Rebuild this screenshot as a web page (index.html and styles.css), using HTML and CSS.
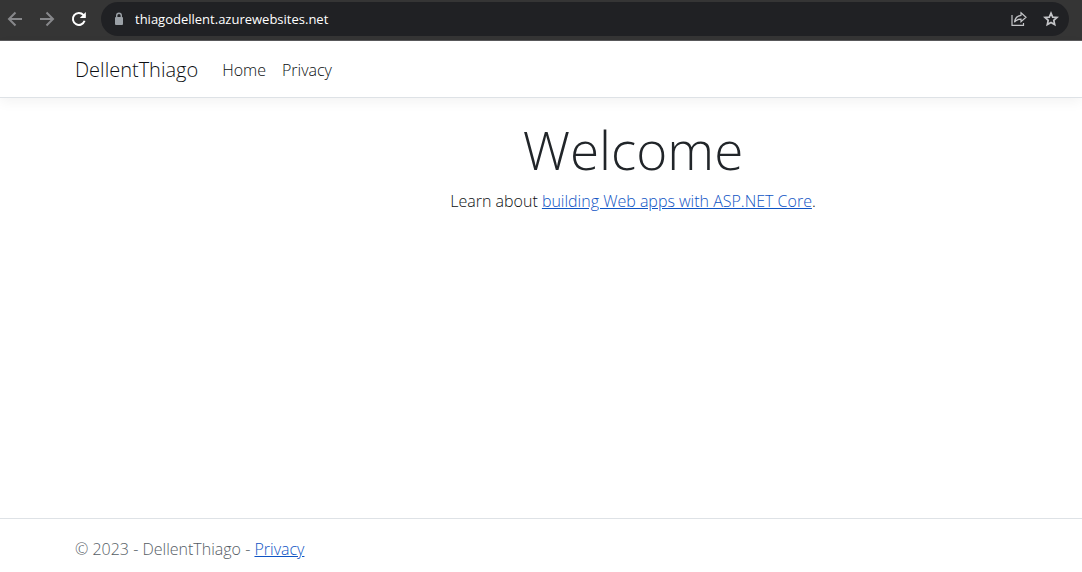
FILE: index.html
```html
<!DOCTYPE html>
<html lang="en">
<head>
<meta charset="utf-8">
<title>Home page - DellentThiago</title>
<link rel="stylesheet" href="styles.css">
</head>
<body>
<div class="toolbar">
  <button class="tool" aria-label="Back"><svg class="dim" width="16" height="16" viewBox="0 0 16 16"><path d="M15 8H2.500M8.500 1.500L2 8L8.500 14.500"/></svg></button>
  <button class="tool" aria-label="Forward"><svg class="dim" width="16" height="16" viewBox="0 0 16 16"><path d="M1 8H13.500M7.500 1.500L14 8L7.500 14.500"/></svg></button>
  <button class="tool" aria-label="Reload"><svg class="bright" width="16" height="16" viewBox="0 0 16 16"><path d="M13.600 9.800A6 6 0 1 1 12.400 3.900L14 5.500"/><path class="solid" d="M14.800 1V7H8.800Z"/></svg></button>
  <div class="address">
    <svg class="lock" width="10" height="14" viewBox="0 0 10 14"><rect x="1" y="5" width="8" height="8" rx="1"/><path d="M2.700 5V3.500a2.300 2.300 0 0 1 4.600 0V5"/></svg>
    <input class="url" type="text" aria-label="Address" value="thiagodellent.azurewebsites.net">
    <button class="tool" aria-label="Share"><svg class="light thin" width="16" height="16" viewBox="0 0 16 16"><path d="M1 4V14.300H12.500V12M10 1.800L15 6.200L10 10.600V8.200C7 8.200 5 9 3.500 11.200C4 7.200 6.300 4.800 10 4.300Z"/></svg></button>
    <button class="tool" aria-label="Bookmark"><svg class="light" width="16" height="16" viewBox="0 0 16 16"><path d="M8 2.200L9.700 6.100L14 6.500L10.800 9.400L11.700 13.600L8 11.400L4.300 13.600L5.200 9.400L2 6.500L6.300 6.100Z"/></svg></button>
  </div>
</div>
<header class="header">
  <nav class="nav">
    <a class="brand" href="#">DellentThiago</a>
    <a class="nav-link" href="#">Home</a>
    <a class="nav-link" href="#">Privacy</a>
  </nav>
</header>
<main class="main">
  <h1 class="title">Welcome</h1>
  <p class="lead">Learn about <a class="link" href="#">building Web apps with ASP.NET Core</a>.</p>
</main>
<footer class="footer">© 2023 - DellentThiago - <a class="link" href="#">Privacy</a></footer>
</body>
</html>
```
FILE: styles.css
```css
* { box-sizing: border-box; }
body {
  margin: 0;
  min-height: 100vh;
  display: flex;
  flex-direction: column;
  background: #fff;
  color: #0c0f12;
  font: 300 16px/24px "Segoe UI", "Open Sans", "Noto Sans", sans-serif;
}
.toolbar {
  display: flex;
  align-items: center;
  gap: 16px;
  height: 41px;
  padding: 0 13px 3px 7px;
  background: #353535;
  border-bottom: 1px solid #5a5a5c;
}
.tool { display: flex; padding: 0; border: 0; background: none; }
svg { fill: none; stroke-width: 2; flex: none; }
.dim { stroke: #87888b; }
.bright { stroke: #fff; }
.solid { fill: #fff; stroke: none; }
.light { stroke: #c4c5c8; stroke-width: 1.7; }
.thin { stroke-width: 1.2; }
.lock { stroke: #9aa0a6; stroke-width: 1.4; }
.lock rect { fill: #9aa0a6; stroke: none; }
.address {
  flex: 1;
  display: flex;
  align-items: center;
  gap: 16px;
  height: 34px;
  margin-left: -2px;
  padding: 0 10px 0 13px;
  border-radius: 17px;
  background: #202124;
}
.url {
  flex: 1;
  min-width: 0;
  margin-left: -5px;
  padding: 0;
  border: 0;
  background: none;
  color: #fff;
  font: 13px/20px "Segoe UI", "Open Sans", "Noto Sans", sans-serif;
}
.header {
  padding: 9px 75px 7px;
  border-bottom: 1px solid #dee2e6;
  box-shadow: 0 4px 12px rgba(0, 0, 0, .05);
}
.nav { display: flex; align-items: center; height: 40px; }
.brand { margin-right: 16px; font-size: 20px; line-height: 30px; }
.nav-link { padding: 8px; }
.brand, .nav-link { color: #0c0f12; text-decoration: none; }
.main { flex: 1; padding: 18px 0 16px 184px; text-align: center; }
.title { margin: 0 0 5px; color: #212529; font-size: 53px; line-height: 68px; font-weight: 300; }
.lead { margin: 0; }
.link { color: #0f54c4; text-decoration: underline; }
.footer { padding: 18px 75px 11px; border-top: 1px solid #dee2e6; color: #555d65; }
```
